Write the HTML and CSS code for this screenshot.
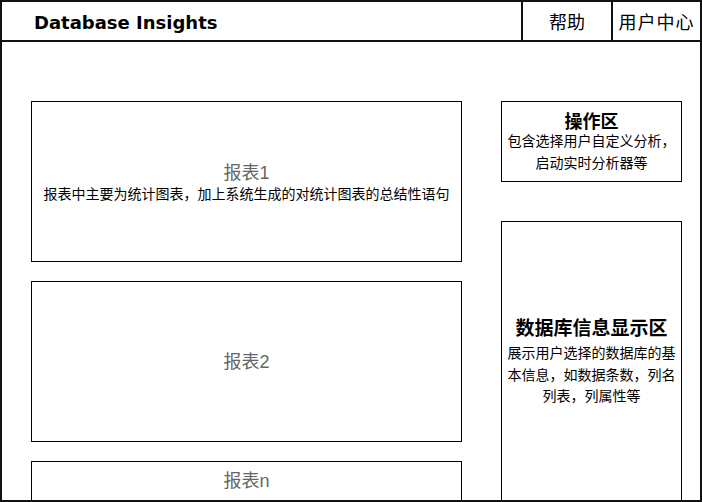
FILE: index.html
```html
<!DOCTYPE html>
<html>
<head>
<meta charset="utf-8">
<title>Database Insights</title>
<link rel="stylesheet" href="styles.css">
</head>
<body>
<div class="frame">
    <div class="topbar">
        <div class="brand">Database Insights</div>
        <div class="nav_item">帮助</div>
        <div class="nav_item">用户中心</div>
    </div>
    <div class="main">
        <div class="reports">
            <div class="box report">
                <div class="report_title">报表1</div>
                <div class="report_desc">报表中主要为统计图表，加上系统生成的对统计图表的总结性语句</div>
            </div>
            <div class="box report">
                <div class="report_title">报表2</div>
            </div>
            <div class="box report report_last">
                <div class="report_title">报表n</div>
            </div>
        </div>
        <div class="side">
            <div class="box side_ops">
                <div class="side_title">操作区</div>
                <div class="side_text">包含选择用户自定义分析，<br>启动实时分析器等</div>
            </div>
            <div class="box side_info">
                <div class="side_title side_title_big">数据库信息显示区</div>
                <div class="side_text">展示用户选择的数据库的基本信息，如数据条数，列名列表，列属性等</div>
            </div>
        </div>
    </div>
</div>
</body>
</html>
```
FILE: styles.css
```css
body { margin: 0; background: #fff; font-family: "Liberation Sans", "Noto Sans CJK SC", sans-serif; color: #000; }

.frame { width: 702px; height: 502px; box-sizing: border-box; border: 2px solid #111; overflow: hidden; }

.topbar { display: flex; height: 40px; box-sizing: border-box; border-bottom: 2px solid #111; }
.brand { flex: 1; padding: 2px 0 0 32px; font: bold 18px/38px "DejaVu Sans", sans-serif; }
.nav_item { width: 88px; border-left: 2px solid #111; text-align: center; line-height: 38px; font-size: 18px; font-family: "Noto Sans CJK SC", serif; }
.nav_item:last-child { width: 87px; letter-spacing: 1px; }

.main { display: flex; padding: 59px 0 0 29px; gap: 39px; }

.box { border: 1px solid #000; box-sizing: border-box; display: flex; flex-direction: column; justify-content: center; align-items: center; text-align: center; }

.reports { width: 431px; display: flex; flex-direction: column; gap: 19px; }
.report { height: 161px; }
.report_last { justify-content: flex-start; padding-top: 7px; }
.report_title { font-size: 18px; color: #666; line-height: 24px; }
.report_desc { font-size: 14px; line-height: 18px; }

.side { width: 181px; display: flex; flex-direction: column; gap: 39px; }
.side_ops { height: 81px; }
.side_info { height: 300px; justify-content: flex-start; padding: 91px 4px 0; }
.side_title { font-family: "Noto Sans CJK SC", serif; font-weight: bold; font-size: 18px; line-height: 22px; }
.side_title_big { font-size: 19px; line-height: 28px; margin-bottom: 2px; }
.side_text { font-size: 14px; line-height: 21.5px; }
```
